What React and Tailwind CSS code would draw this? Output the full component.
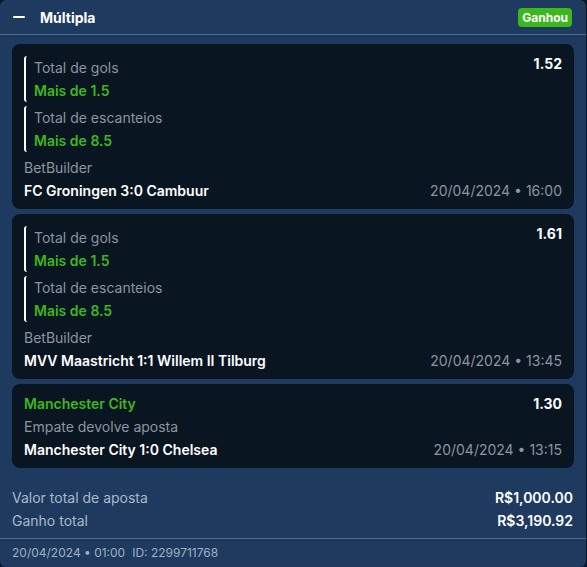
import React from "react";

const font = { fontFamily: "Inter, 'Noto Sans', sans-serif" };

function Leg({ label, value }) {
  return (
    <div className="border-l-2 border-white rounded-l-[3px] pl-2 text-sm leading-[23px]">
      <div className="text-[#8d949e]">{label}</div>
      <div className="text-[#3cb81c] font-semibold">{value}</div>
    </div>
  );
}

function BuilderCard({ odds, match, date }) {
  return (
    <div className="bg-[#0a1522] rounded-lg pl-3 pr-3 pt-2 pb-[7px]">
      <div className="flex justify-between items-start">
        <div className="flex flex-col gap-1 mt-1">
          <Leg label="Total de gols" value="Mais de 1.5" />
          <Leg label="Total de escanteios" value="Mais de 8.5" />
        </div>
        <div className="text-white font-bold text-sm leading-6">{odds}</div>
      </div>
      <div className="mt-1 text-sm leading-[23px] text-[#8d949e]">BetBuilder</div>
      <div className="flex justify-between text-sm leading-[23px]">
        <span className="text-white font-semibold">{match}</span>
        <span className="text-[#8d949e]">{date}</span>
      </div>
    </div>
  );
}

export default function App() {
  return (
    <div className="bg-[#0b1624] w-[587px] h-[567px]" style={font}>
      <div className="w-[586px] h-[567px] bg-[#1e3a5f] rounded-md flex flex-col overflow-hidden">
        <div className="h-[35px] flex items-center justify-between pl-[13px] pr-[14px] border-b border-[#4b6a8d]">
          <div className="flex items-center">
            <div className="w-3 h-[2px] bg-white rounded-sm"></div>
            <span className="ml-[15px] text-white font-bold text-[14px]">Múltipla</span>
          </div>
          <div className="bg-[#3cb81c] text-white font-bold text-[12px] leading-[19px] px-1 rounded">Ganhou</div>
        </div>
        <div className="px-3 pt-[9px] flex flex-col gap-[5px]">
          <BuilderCard odds="1.52" match="FC Groningen 3:0 Cambuur" date="20/04/2024 • 16:00" />
          <BuilderCard odds="1.61" match="MVV Maastricht 1:1 Willem II Tilburg" date="20/04/2024 • 13:45" />
          <div className="bg-[#0a1522] rounded-lg px-3 pt-2 pb-[7px]">
            <div className="flex justify-between items-start">
              <div className="text-sm leading-[23px]">
                <div className="text-[#3cb81c] font-semibold">Manchester City</div>
                <div className="text-[#8d949e]">Empate devolve aposta</div>
              </div>
              <div className="text-white font-bold text-sm leading-6">1.30</div>
            </div>
            <div className="flex justify-between text-sm leading-[23px]">
              <span className="text-white font-semibold">Manchester City 1:0 Chelsea</span>
              <span className="text-[#8d949e]">20/04/2024 • 13:15</span>
            </div>
          </div>
        </div>
        <div className="pl-3 pr-[13px] pt-[18px] pb-[6px] text-sm leading-[23px] border-b border-[#4b6a8d]">
          <div className="flex justify-between">
            <span className="text-[#aab8c8]">Valor total de aposta</span>
            <span className="text-white font-semibold">R$1,000.00</span>
          </div>
          <div className="flex justify-between">
            <span className="text-[#aab8c8]">Ganho total</span>
            <span className="text-white font-semibold">R$3,190.92</span>
          </div>
        </div>
        <div className="px-3 flex-1 flex items-center text-[12px] text-[#9eb0c4]">
          <span>20/04/2024 • 01:00</span>
          <span className="ml-[7px]">ID: 2299711768</span>
        </div>
      </div>
    </div>
  );
}
